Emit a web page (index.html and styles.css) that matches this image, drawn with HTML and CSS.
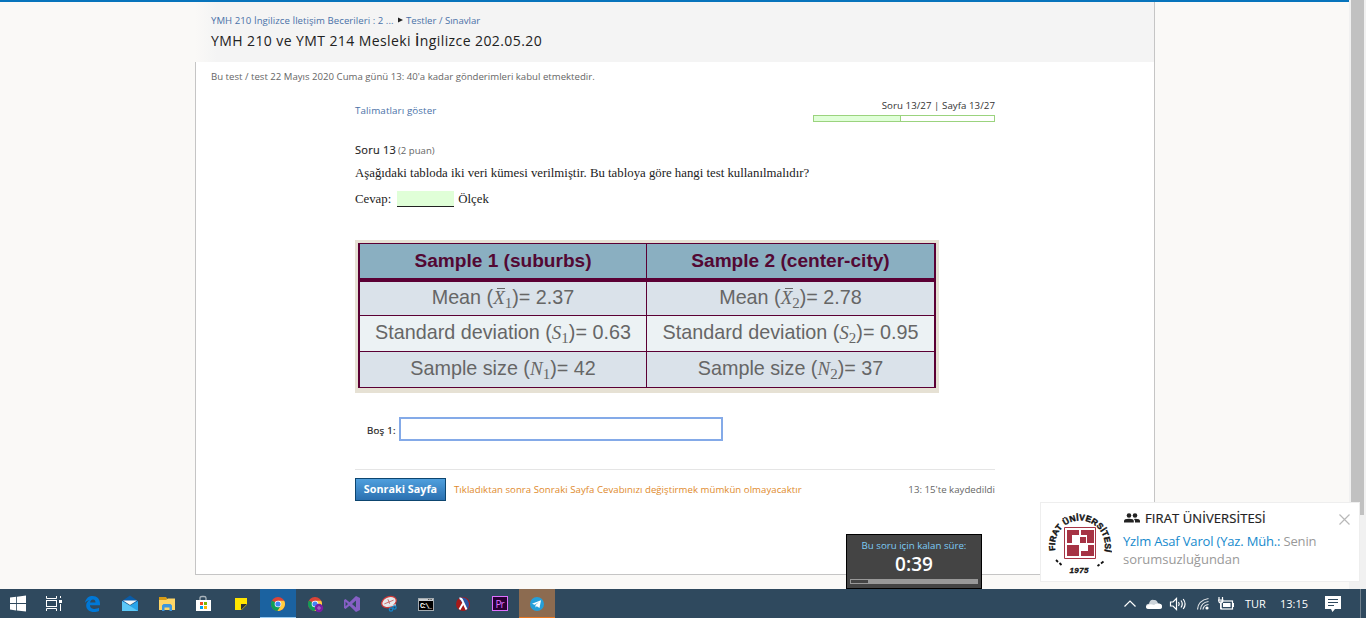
FILE: index.html
```
<!DOCTYPE html>
<html lang="tr">
<head>
<meta charset="utf-8">
<title>YMH 210 ve YMT 214</title>
<link rel="stylesheet" href="styles.css">
</head>
<body>
<div class="screen">
  <div class="viewport">
    <div class="page">
      <main class="panel">
        <header class="head">
          <div class="crumbs"><a class="crumb-a">YMH 210 İngilizce İletişim Becerileri : 2 ...</a><svg class="arrow" width="5" height="6" viewBox="0 0 5 6"><path d="M0 0.5L5 3L0 5.5Z" fill="#222"/></svg><a class="crumb-b">Testler / Sınavlar</a></div>
          <h1 class="title">YMH 210 ve YMT 214 Mesleki <span class="cap">İ</span>ngilizce 202.05.20</h1>
        </header>
        <section class="body">
          <p class="notice">Bu test / test 22 Mayıs 2020 Cuma günü 13: 40'a kadar gönderimleri kabul etmektedir.</p>
          <div class="quiz">
            <div class="quiz-top">
              <a class="instr">Talimatları göster</a>
              <div class="progress"><span class="progress-text">Soru 13/27 | Sayfa 13/27</span><div class="bar"><div class="bar-fill"></div></div></div>
            </div>
            <div class="q-head"><span class="q-no">Soru 13</span><span class="q-pts">(2 puan)</span></div>
            <p class="q-text">Aşağıdaki tabloda iki veri kümesi verilmiştir. Bu tabloya göre hangi test kullanılmalıdır?</p>
            <p class="q-answer">Cevap: <span class="blank"></span>Ölçek</p>
            <div class="figure">
              <div class="grid">
                <div class="th">Sample 1 (suburbs)</div><div class="th">Sample 2 (center-city)</div>
                <div class="thick"></div>
                <div class="td first">Mean (<i class="mean">X</i><sub>1</sub>)= 2.37</div><div class="td first">Mean (<i class="mean">X</i><sub>2</sub>)= 2.78</div>
                <div class="td light">Standard deviation (<i>S</i><sub>1</sub>)= 0.63</div><div class="td light">Standard deviation (<i>S</i><sub>2</sub>)= 0.95</div>
                <div class="td last">Sample size (<i>N</i><sub>1</sub>)= 42</div><div class="td last">Sample size (<i>N</i><sub>2</sub>)= 37</div>
              </div>
            </div>
            <label class="field"><span class="field-label">Boş 1:</span><input class="field-input" type="text"></label>
            <div class="actions">
              <button class="next">Sonraki Sayfa</button>
              <span class="warn">Tıkladıktan sonra Sonraki Sayfa Cevabınızı değiştirmek mümkün olmayacaktır</span>
              <span class="saved">13: 15'te kaydedildi</span>
            </div>
          </div>
        </section>
      </main>
    </div>
    <div class="scroll"><div class="thumb"></div></div>
  </div>

  <nav class="taskbar">
    <div class="apps">
      <div class="app"><svg width="36" height="29" viewBox="0 0 36 29"><path fill="#fff" d="M10 8.600L16.200 7.800V14H10ZM17 7.700L26 6.600V14H17ZM10 15H16.200V21.400L10 20.500ZM17 15H26V22.600L17 21.400Z"/></svg></div>
      <div class="app"><svg width="36" height="29" viewBox="1 0 36 29"><g fill="none" stroke="#fff"><path d="M10.500 7V9.500H20.500V7M10.500 22V19.500H20.500V22"/><rect x="10.500" y="11.500" width="10" height="6"/><path d="M24.500 7V9M24.500 15V22"/></g><rect x="23" y="11" width="3" height="3" fill="#fff"/></svg></div>
      <div class="app"><svg width="36" height="29" viewBox="0 0 36 29"><path fill="#0078d7" d="M11 13.800C12 8.800 15 7 18.600 7C23 7 26 10 26 14.500V16.200H16C16 19 18.500 20 20.500 20C22.300 20 23.800 19.500 25 18.800V22C23.500 22.700 22 23 20 23C15.500 23 12.200 20.500 12.200 16.500C12.200 14 13.500 12 15.700 10.900C13.500 11.300 12 12.500 11 13.800ZM16.100 13.500H21.500C21.500 11.700 20.700 10.500 19 10.500C17.500 10.500 16.400 11.700 16.100 13.500Z"/></svg></div>
      <div class="app"><svg width="36" height="29" viewBox="-1 0 36 29"><path fill="#0a5ca8" d="M10 12L18 6.500L26 12V14H10Z"/><path fill="#2aa5ea" d="M10 12L18 16.500L26 12V22H10Z"/><path fill="#5cc8f7" d="M10 12L26 22H10Z"/><path fill="#f4f6f7" d="M11 11.500H25L18 16Z"/></svg></div>
      <div class="app"><svg width="36" height="29" viewBox="-1 0 36 29"><path fill="#d69b16" d="M10 8H17L18.500 10V12H10Z"/><path fill="#ffd667" d="M10 11H17L19 9.500H26V21H10Z"/><path fill="#3f97dd" d="M13 22V16.500L14.500 15H21.500L23 16.500V22H20.500V18.500H15.500V22Z"/></svg></div>
      <div class="app"><svg width="36" height="29" viewBox="0 0 36 29"><path d="M15 11V9Q15 7.500 17 7.500H19Q21 7.500 21 9V11" fill="none" stroke="#a9b4bc" stroke-width="1.300"/><path fill="#fff" d="M11 11H26V22H11Z"/><path fill="#f25022" d="M15 13H18V16H15Z"/><path fill="#7fba00" d="M19 13H22V16H19Z"/><path fill="#00a4ef" d="M15 17H18V20H15Z"/><path fill="#ffb900" d="M19 17H22V20H19Z"/></svg></div>
      <div class="app shift"><svg width="36" height="29" viewBox="0 0 36 29"><path fill="#ffe500" d="M12 9H24V21H12Z"/><path fill="#2b2f34" d="M18 15H24L18 21Z"/><path fill="#2f495e" d="M24 15.500V21H18.500Z"/></svg></div>
      <div class="app active"><svg width="36" height="28" viewBox="0 0 36 28"><g transform="translate(18 15)"><circle r="7" fill="#db4437"/><path fill="#0f9d58" d="M0 0L-6.060 -3.500A7 7 0 0 0 -0.500 7L3 1.700Z"/><path fill="#ffcd40" d="M0 -3.200H6.200A7 7 0 0 1 -0.500 7L2.900 1.600Z"/><circle r="3.300" fill="#fff"/><circle r="2.600" fill="#4285f4"/></g></svg></div>
      <div class="app"><svg width="36" height="29" viewBox="0 0 36 29"><g transform="translate(18 15)"><circle r="7" fill="#db4437"/><path fill="#0f9d58" d="M0 0L-6.060 -3.500A7 7 0 0 0 -0.500 7L3 1.700Z"/><path fill="#ffcd40" d="M0 -3.200H6.200A7 7 0 0 1 -0.500 7L2.900 1.600Z"/><circle r="3.300" fill="#fff"/><circle r="2.600" fill="#4285f4"/><circle cx="4" cy="4" r="4.200" fill="#7b1fa2"/><circle cx="4" cy="4" r="1.200" fill="none" stroke="#c9a0dc" stroke-width=".7"/></g></svg></div>
      <div class="app"><svg width="36" height="29" viewBox="0 0 36 29"><path fill="#865fc5" fill-rule="evenodd" d="M22 7L26 9V21L22 23L15.500 16.800L11.500 20L10 19V11L11.500 10L15.500 13.200ZM22 11.500L18 15L22 18.500ZM11.600 12.800V17.200L14 15Z"/></svg></div>
      <div class="app"><svg width="36" height="29" viewBox="0 0 36 29"><g transform="rotate(-22 18 13)"><ellipse cx="18" cy="13" rx="7.600" ry="5.200" fill="#e6eaed" stroke="#cf3a3a" stroke-width="1.200"/><path d="M13 13H23M18 10V15" stroke="#c65d5d" stroke-width=".8"/></g><path d="M17 17L25 16" stroke="#d8dfe4" stroke-width="1.300"/><g fill="none" stroke="#1684c8" stroke-width="1.300"><circle cx="20" cy="20.500" r="1.700"/><circle cx="23.500" cy="18.500" r="1.600"/></g></svg></div>
      <div class="app"><svg class="cmd" width="36" height="29" viewBox="0 0 36 29"><rect x="10.500" y="9.500" width="15" height="12" fill="#000" stroke="#a4abb0"/><path d="M11 10H25V12H11Z" fill="#c9ced2"/><path d="M20 10.500H24" stroke="#555" stroke-dasharray="1 .6"/><text x="12" y="19" textLength="12">C:\_</text></svg></div>
      <div class="app"><svg width="36" height="29" viewBox="0 0 36 29"><circle cx="18" cy="15" r="7" fill="#a61919"/><path fill="#2b55a2" d="M14 9.300A7 7 0 0 1 21.500 21L18 15Z"/><path d="M14.500 9.500Q16.500 9 17.500 12L21.500 20.500M18 14.500L14.500 20.500" fill="none" stroke="#fff" stroke-width="2"/></svg></div>
      <div class="app"><svg class="pr" width="36" height="29" viewBox="0 0 36 29"><rect x="10.500" y="7.500" width="15" height="14" fill="#2a0035" stroke="#df70ff"/><text x="13.500" y="18.500" textLength="9">Pr</text></svg></div>
      <div class="app attention"><svg width="36" height="28" viewBox="0 0 36 28"><circle cx="18" cy="15" r="7" fill="#259fd9"/><path fill="#fff" d="M13 14.800L22 11.300L20.500 19L17.800 17.200L16.500 18.500V16L20 13L15.600 15.800Z"/></svg></div>
    </div>
    <div class="tray">
      <svg class="tray-icons" width="114" height="29" viewBox="0 0 114 29"><g fill="none" stroke="#fff" stroke-width="1.200"><path d="M4.500 17.500L10 12L15.500 17.500"/><path d="M50.500 13V17H53L56.500 20.500V9.500L53 13Z"/><path d="M58.500 13Q60 15 58.500 17M61 11.500Q63.500 15 61 18.500M63.200 10Q67 15 63.200 20"/><g opacity=".85"><path d="M77.500 20.500Q78 11.500 88.500 9.500M80.500 20.500Q81 13.500 88.500 12.500M83 20.500Q83.500 16 88.500 15.500"/></g><rect x="101" y="12" width="11.500" height="8"/><path d="M99 8V10.500M102.500 8V10.500M98 11H103.500M98.700 11Q98.800 14 100.700 14Q102.800 14 102.900 11M100.700 14V19.500H102"/></g><rect x="103" y="14" width="7.500" height="4" fill="#fff"/><path d="M113.500 14V18" stroke="#fff"/><circle cx="87" cy="19" r="1.600" fill="#fff"/><path fill="#cdd4da" d="M29 20Q26 20 26 17.500Q26 15 29 14.800Q30 10 34 11Q37 10.500 38 14.500Q42 14.500 42 17.500Q42 20 39 20Z"/><path fill="#fff" d="M29 20Q26 20 26 17.500Q29 14 34 16Q35 14.500 38 14.500Q42 14.500 42 17.500Q42 20 39 20Z"/></svg>
      <span class="lang">TUR</span><span class="clock">13:15</span>
      <svg class="note" width="16" height="16" viewBox="0 0 16 16"><path fill="#fff" d="M0 0H16V13H10L7.500 16L6 13H0Z"/><path stroke="#2f495e" d="M3 3.500H13M3 6.500H13M3 9.500H9"/></svg>
      <span class="desk"></span>
    </div>
  </nav>

  <aside class="timer">
    <div class="timer-label">Bu soru için kalan süre:</div>
    <div class="timer-value">0:39</div>
    <div class="timer-bar"><div class="timer-left"></div></div>
  </aside>

  <aside class="toast">
    <svg class="logo" width="70" height="70" viewBox="0 0 70 70">
      <defs><path id="arc" d="M13.500 44.500A25 25 0 1 1 62.500 44.500L60 54"/></defs>
      <text class="logo-ring"><textPath href="#arc">FIRAT ÜNİVERSİTESİ</textPath></text>
      <path d="M22.500 21.500H53.500V52.500H22.500Z" fill="#fff" stroke="#a63344"/>
      <path fill="#a63344" d="M25 24H37V29H30V37H25ZM39 24H52V37H45V29H39ZM25 39H37V50H25ZM39 45H46V39H52V50H39ZM38 31H44V37H38Z"/>
      <path d="M14 54L16 56M17.500 57L19.500 59M55.500 60L57.500 58.500M59 57.500L61.500 55.500" stroke="#111" stroke-width="1.800"/>
      <text class="logo-year" x="27.500" y="66.500" textLength="19">1975</text>
    </svg>
    <div class="toast-body">
      <div class="toast-title"><svg width="16" height="10" viewBox="0 0 16 10"><g fill="#222"><circle cx="5" cy="2.500" r="2.300"/><circle cx="11" cy="2.500" r="2.300"/><path d="M0 9.500V8Q0 5.800 5 5.800Q9.800 5.800 9.800 8V9.500ZM11 9.500V8Q11 6.700 9.800 5.900Q16 5.500 16 8V9.500Z"/></g></svg><span>FIRAT ÜNİVERSİTESİ</span></div>
      <div class="toast-text msg-a"><b>Yzlm Asaf Varol (Yaz. Müh.:</b> Senin</div>
      <div class="toast-text msg-b">sorumsuzluğundan</div>
    </div>
    <svg class="close" width="11" height="11" viewBox="0 0 11 11"><path d="M.5 .5L10.500 10.500M10.500 .5L.5 10.500" stroke="#b8b8b8" stroke-width="1.200"/></svg>
  </aside>
</div>
</body>
</html>
```
FILE: styles.css
```
* { box-sizing: border-box; }
body { margin: 0; font-family: "Open Sans", sans-serif; }
p, h1 { margin: 0; font-weight: 400; }
svg { display: block; flex: none; }
.screen { position: relative; width: 1366px; height: 618px; overflow: hidden; display: flex; flex-direction: column; white-space: nowrap; }
.viewport { height: 589px; display: flex; }
.page { width: 1349px; background: #faf9f7; border-top: 2px solid #0774bc; padding-left: 195px; }
.panel { width: 960px; height: 573px; display: flex; flex-direction: column; border-right: 1px solid #c5c5c5; }
.head { height: 60px; background: linear-gradient(90deg, #faf9f7, #f4f4f4 22px); padding: 11px 0 0 16px; }
.crumbs { display: flex; align-items: center; height: 14px; font-size: 9.600px; color: #4a72a8; }
.crumb-a { width: 187px; letter-spacing: .05px; }
.arrow { margin-right: 3px; }
.crumb-b { letter-spacing: 0; }
.title { font-size: 14px; line-height: 20px; margin-top: 4px; color: #222; letter-spacing: .41px; }
.cap { font-weight: 600; }
.body { flex: 1; background: #fff; border-left: 1px solid #c5c5c5; border-bottom: 1px solid #c5c5c5; padding: 8px 0 0 15px; }
.notice { font-size: 9.600px; line-height: 14px; color: #666; letter-spacing: .01px; }
.quiz { width: 641px; margin: 15px 0 0 144px; }
.quiz-top { display: flex; justify-content: space-between; height: 43px; }
.instr { font-size: 9.800px; line-height: 14px; margin-top: 5px; color: #4a72a8; letter-spacing: .1px; }
.progress { width: 182px; display: flex; flex-direction: column; align-items: flex-end; margin-right: 1px; }
.progress-text { font-size: 9.700px; line-height: 14px; color: #333; letter-spacing: .05px; }
.bar { width: 182px; height: 7px; border: 1px solid #9bd37e; margin-top: 2px; background: #fff; }
.bar-fill { width: 87px; height: 5px; background: #e0ffd8; border-right: 1px solid #9bd37e; }
.q-head { display: flex; align-items: baseline; line-height: 16px; }
.q-no { font-size: 11px; color: #222; width: 43px; letter-spacing: .25px; -webkit-text-stroke: .15px #222; }
.q-pts { font-size: 9.600px; color: #666; }
.q-text, .q-answer { font-family: "Liberation Serif", serif; font-size: 12.800px; line-height: 16px; color: #222; }
.q-text { margin-top: 6px; }
.q-answer { margin-top: 10px; display: flex; }
.blank { width: 57px; height: 16px; background: #e0ffd8; border-bottom: 1px solid #222; margin: 0 4px 0 6px; }
.figure { width: 584px; height: 153px; margin-top: 33px; background: #e6e1d4; padding: 3px; }
.grid { width: 578px; height: 145px; display: grid; grid-template: 34px 2px 33px 35px 35px / 286px 287px; gap: 1px; padding: 1px 1px 1px 2px; background: #5b0034; }
.thick { grid-column: span 2; }
.th, .td { text-align: center; font-family: "Liberation Sans", Arial, sans-serif; font-size: 19.100px; line-height: 33px; }
.th { background: #8aafc1; color: #530833; font-weight: 700; line-height: 34px; }
.td { background: #dae2ea; color: #666; font-size: 19.750px; }
.td.first { line-height: 30px; }
.td.light { background: #ecf2f4; line-height: 33px; }
.td.last { line-height: 33px; }
.td i { font-family: "Liberation Serif", serif; font-size: 19px; }
.td sub { font-family: "Liberation Serif", serif; font-size: 15px; line-height: 0; vertical-align: -4px; }
.mean { position: relative; }
.mean::before { content: ""; position: absolute; left: 4px; top: 1px; width: 8px; height: 1px; background: #666; }
.field { display: flex; align-items: center; height: 24px; margin: 24px 0 0 12px; }
.field-label { width: 32px; font-size: 9.700px; color: #222; letter-spacing: .25px; -webkit-text-stroke: .2px #222; padding-top: 2px; }
.field-input { width: 324px; height: 24px; border: 2px solid #84aae8; padding: 0; background: #fff; outline: 0; }
.actions { display: flex; align-items: center; height: 32px; margin-top: 28px; width: 640px; border-top: 1px solid #e5e5e5; padding-top: 8px; }
.next { width: 91px; height: 23px; padding: 0 0 2px; border: 1px solid #0d456f; background: linear-gradient(#4f9fdd, #2b70b0); color: #fff; font: 700 10.800px "Open Sans", sans-serif; }
.warn { font-size: 9.600px; color: #e08a2c; margin-left: 8px; letter-spacing: .045px; }
.saved { font-size: 9.700px; color: #666; margin-left: auto; }
.scroll { width: 17px; background: #f1f1f1; padding-left: 2px; }
.thumb { width: 13px; height: 515px; background: #c1c1c1; }
.taskbar { height: 29px; background: #2f495e; display: flex; justify-content: space-between; }
.apps { display: flex; gap: 1px; }
.app { width: 36px; height: 29px; }
.shift { margin-left: 1px; }
.active { background: #1b62a0; border-bottom: 1px solid #9acbf1; }
.attention { background: #8c6b50; border-bottom: 1px solid #e87722; }
.cmd text { font: 700 7px "Liberation Mono", monospace; fill: #fff; }
.pr text { font: 10px "Open Sans", sans-serif; fill: #df70ff; }
.tray { display: flex; align-items: center; color: #fff; font-size: 11px; width: 246px; }
.tray-icons { width: 114px; }
.lang { width: 35px; margin-left: 11px; }
.clock { width: 45px; }
.note { margin: 1px 19px 0 0; }
.desk { width: 1px; height: 29px; background: #71818e; }
.timer { position: absolute; left: 846px; top: 534px; width: 136px; height: 55px; background: #444; border: 1px solid #000; text-align: center; padding: 4px 3px 0; }
.timer-label { color: #7ccbf5; font-size: 9.700px; line-height: 14px; }
.timer-value { color: #fff; font-size: 19px; line-height: 22px; height: 24px; font-weight: 600; }
.timer-bar { height: 5px; background: #999; padding: 1px; margin-top: 2px; }
.timer-left { width: 17px; height: 3px; background: #444; }
.toast { position: absolute; left: 1040px; top: 502px; width: 320px; height: 80px; background: #fff; border: 1px solid #eee; display: flex; }
.logo { margin: 3px 0 0 1px; }
.logo-ring { font: 700 8.500px "Liberation Sans", Arial, sans-serif; letter-spacing: .2px; fill: #111; stroke: #111; stroke-width: .4px; }
.logo-year { font: italic 700 8px "Liberation Sans", sans-serif; fill: #111; stroke: #111; stroke-width: .3px; }
.toast-body { width: 220px; padding: 4px 0 0 11px; }
.toast-title { display: flex; align-items: center; gap: 5px; height: 22px; padding-left: 1px; font-size: 13px; color: #222; letter-spacing: .1px; -webkit-text-stroke: .2px #222; }
.toast-text { font-size: 13px; line-height: 18px; color: #999; }
.toast-text b { font-weight: 400; color: #168acd; }
.msg-a { margin-top: 3px; letter-spacing: -.17px; }
.close { margin: 11px 0 0 7px; }
```
